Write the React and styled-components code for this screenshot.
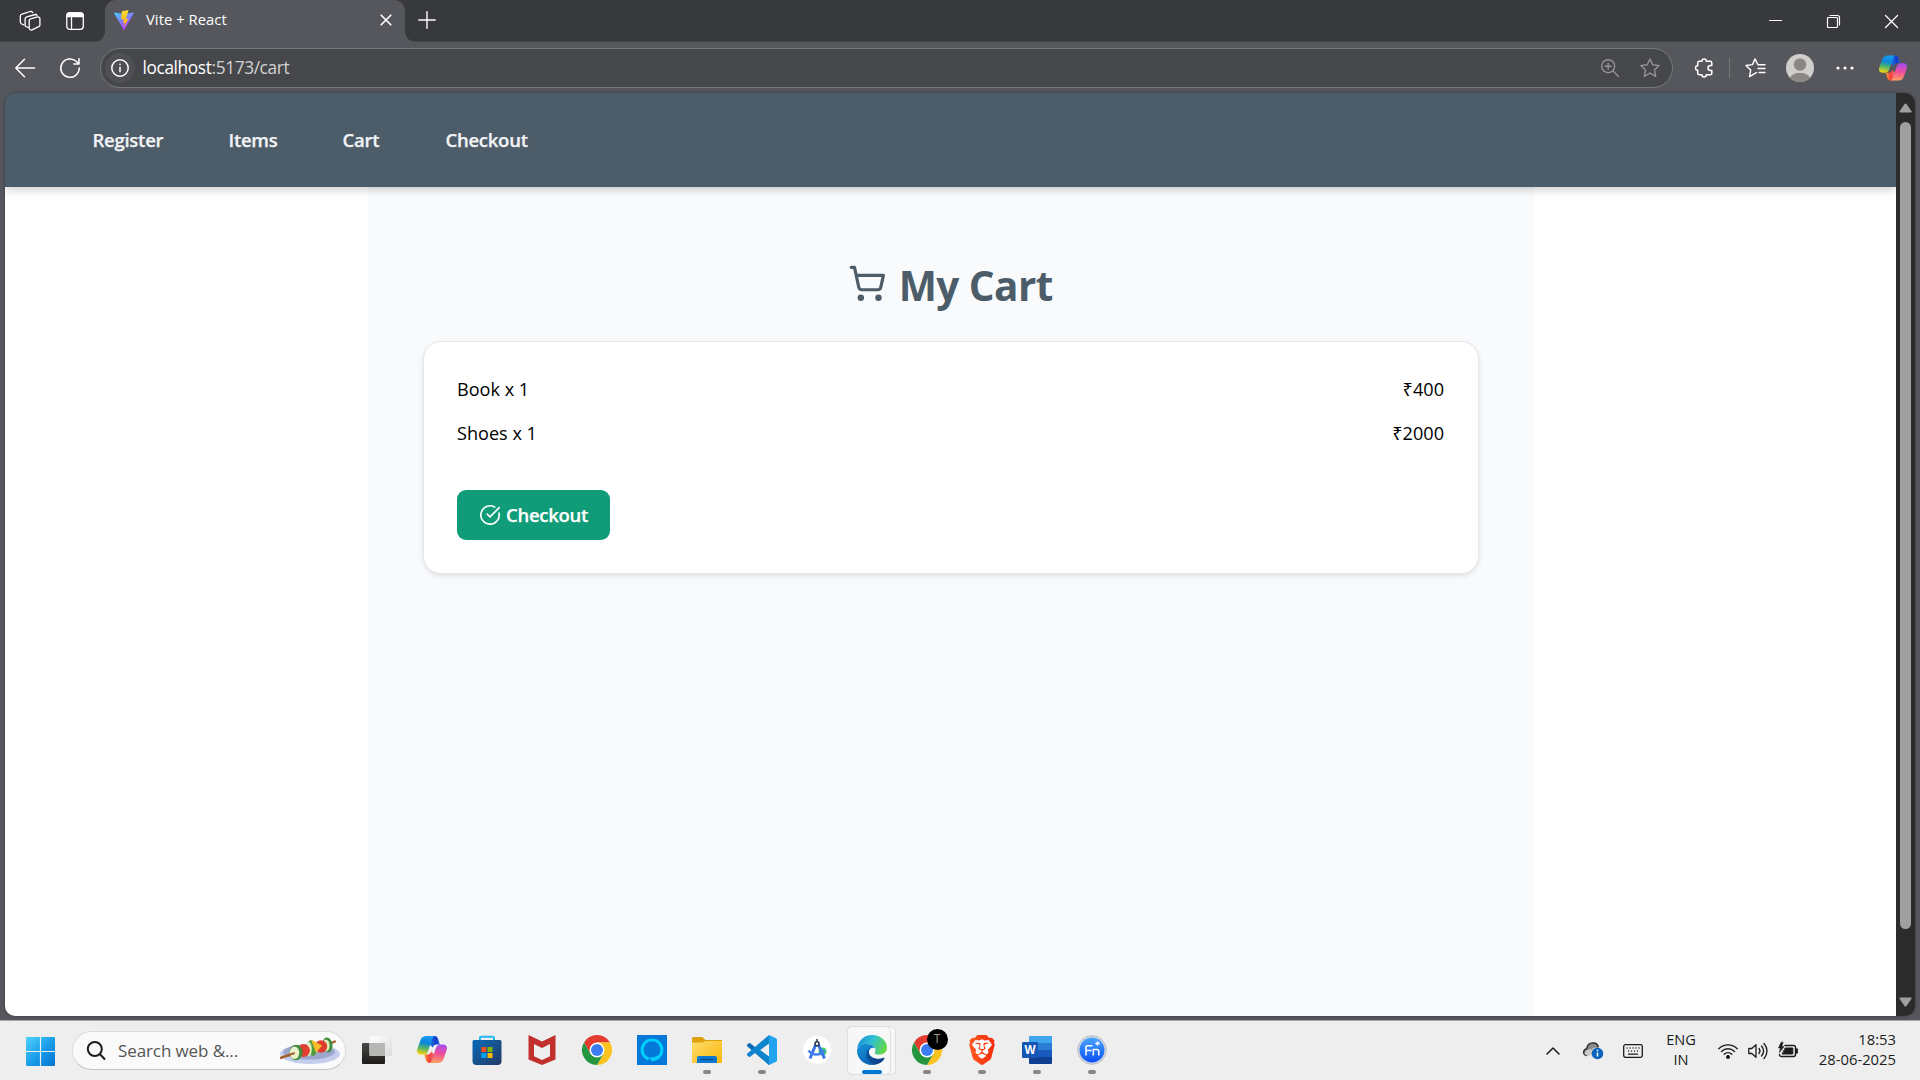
import React from "react";
import styled, { createGlobalStyle } from "styled-components";
import { ShoppingCart, CircleCheckBig } from "lucide-react";
import { SiBrave } from "react-icons/si";

const ui = `"Segoe UI", "Open Sans", "Noto Sans", sans-serif`;

const GlobalStyle = createGlobalStyle`
  * { box-sizing: border-box; }
  html, body { margin: 0; padding: 0; overflow: hidden; background: #56575c; }
  body { font-family: ${ui}; }
  svg { display: block; flex: none; overflow: visible; }
`;

const Screen = styled.div`
  width: 1920px;
  height: 1080px;
  display: flex;
  flex-direction: column;
  background: #56575c;
  overflow: hidden;
`;

const Cell = styled.div`
  width: ${(p) => p.$w}px;
  height: 100%;
  flex: none;
  display: flex;
  align-items: center;
  justify-content: center;
`;

/* ---------- tab strip ---------- */
const TabStrip = styled.header`
  height: 42px;
  flex: none;
  display: flex;
  padding-left: 10px;
  background: #38393c;
  box-shadow: inset 0 -1px #45464a;
`;
const StripTools = styled.div`
  display: flex;
  gap: 5px;
  height: 41px;
  margin-right: 10px;
`;
const Tab = styled.div`
  position: relative;
  width: 300px;
  height: 42px;
  display: flex;
  align-items: center;
  padding: 0 11px 2px 9px;
  color: #fff;
  background: #56575c;
  border-radius: 11px 11px 0 0;
  &::before, &::after {
    content: "";
    position: absolute;
    bottom: 0;
    width: 10px;
    height: 10px;
  }
  &::before { left: -10px; background: radial-gradient(circle at 0 0, transparent 9.5px, #56575c 10px); }
  &::after { right: -10px; background: radial-gradient(circle at 100% 0, transparent 9.5px, #56575c 10px); }
`;
const TabTitle = styled.span`
  flex: 1;
  margin-left: 12px;
  padding-bottom: 2px;
  font-size: 14.8px;
  line-height: 20px;
  letter-spacing: 0.04px;
`;
const NewTab = styled.div`
  display: flex;
  height: 39px;
  margin-left: 2px;
`;
const WindowControls = styled.div`
  display: flex;
  height: 42px;
  margin-left: auto;
`;

/* ---------- toolbar ---------- */
const Toolbar = styled.div`
  height: 51px;
  flex: none;
  display: flex;
  align-items: center;
  padding: 1px 0 0 5px;
  color: #fff;
`;
const NavButtons = styled.div`
  display: flex;
  gap: 5px;
  margin-right: 10px;
`;
const AddressBar = styled.div`
  width: 1573px;
  height: 40px;
  display: flex;
  align-items: center;
  padding: 0 2px 0 4px;
  background: #46474a;
  border: 1px solid #77787c;
  border-radius: 20px;
`;
const SiteInfo = styled.div`
  width: 30px;
  height: 30px;
  display: grid;
  place-items: center;
  background: #4f5054;
  border-radius: 50%;
`;
const Url = styled.span`
  flex: 1;
  margin-left: 7.5px;
  padding-bottom: 1px;
  font-size: 17.3px;
  line-height: 24px;
  color: #d2d2d3;
  letter-spacing: -0.38px;
  b { font-weight: 400; color: #fff; }
`;
const ToolbarActions = styled.div`
  display: flex;
  height: 40px;
  margin-left: 12px;
`;
const Divider = styled.i`
  width: 1px;
  height: 20px;
  background: #77787c;
`;

/* ---------- viewport ---------- */
const Viewport = styled.div`
  height: 923px;
  margin: 0 5px;
  flex: none;
  display: flex;
  border-radius: 10px;
  overflow: hidden;
  box-shadow: 0 0 3px rgba(0, 0, 0, 0.35);
`;
const Page = styled.div`
  flex: 1;
  display: flex;
  flex-direction: column;
  background: linear-gradient(#4d5c69 90px, #fff 90px);
  overflow: hidden;
`;
const NavBar = styled.nav`
  position: relative;
  height: 94px;
  flex: none;
  display: flex;
  align-items: center;
  gap: 65.5px;
  padding: 0 0 1px 87.5px;
  background: #4d5c69;
  box-shadow: 0 2px 9px rgba(0, 0, 0, 0.22);
`;
const NavLink = styled.a`
  width: ${(p) => p.$w}px;
  font-size: 18.5px;
  line-height: 26px;
  font-weight: 650;
  letter-spacing: -0.26px;
  -webkit-text-stroke: 0.25px #f3f4f6;
  white-space: nowrap;
  color: #f3f4f6;
`;
const Main = styled.main`
  width: 1166px;
  flex: 1;
  margin-left: 363px;
  padding: 66px 55px 0;
  background: #f9fafc;
`;
const Title = styled.h1`
  height: 64px;
  margin: 0 0 24px;
  display: flex;
  align-items: center;
  justify-content: center;
  gap: 12px;
  padding-right: 1px;
  font-size: 40.5px;
  line-height: 64px;
  font-weight: 700;
  letter-spacing: -0.55px;
  color: #4d5c69;
  svg { margin-bottom: 3px; }
  span { padding-top: 1px; }
`;
const Card = styled.section`
  height: 233px;
  padding: 34px 34px 0 33px;
  display: flex;
  flex-direction: column;
  align-items: stretch;
  background: #fff;
  border: 1px solid #e5e7eb;
  border-radius: 18px;
  box-shadow: 0 2px 5px rgba(0, 0, 0, 0.1);
`;
const CartRow = styled.div`
  height: 26px;
  margin-bottom: 18px;
  display: flex;
  justify-content: space-between;
  font-size: 18.1px;
  line-height: 26px;
  color: #000;
`;
const CheckoutButton = styled.button`
  width: 153px;
  height: 50px;
  margin-top: 26px;
  padding: 0 0 0 22px;
  display: flex;
  align-items: center;
  gap: 5px;
  border: 0;
  border-radius: 9px;
  background: #109c78;
  color: #fff;
  font-family: ${ui};
  font-size: 18.5px;
  font-weight: 650;
  letter-spacing: -0.28px;
  -webkit-text-stroke: 0.25px #fff;
  span { padding-bottom: 2px; }
`;
const ScrollBar = styled.div`
  width: 19px;
  flex: none;
  display: flex;
  flex-direction: column;
  align-items: center;
  justify-content: space-between;
  padding: 10px 0 9px;
  background: #2b2b2b;
`;
const Thumb = styled.div`
  width: 11px;
  height: 807px;
  margin: 9px 0 auto;
  border-radius: 6px;
  background: #9f9f9f;
`;

/* ---------- taskbar ---------- */
const Taskbar = styled.footer`
  height: 60px;
  margin-top: 4px;
  flex: none;
  display: flex;
  align-items: center;
  background: #eeeeee;
  border-top: 1px solid #a5a5a7;
  color: #1c1c1c;
`;
const Start = styled.div`
  margin: 1px 17px 0 26px;
`;
const SearchBox = styled.div`
  width: 274px;
  height: 39px;
  display: flex;
  align-items: center;
  padding: 0 5px 0 14px;
  border: 1px solid #dcdcdc;
  border-bottom-color: #c4c4c4;
  border-radius: 20px;
  background: #fafafa;
  font-size: 17px;
  color: #555;
`;
const SearchText = styled.span`
  flex: 1;
  margin-left: 13px;
  letter-spacing: -0.1px;
`;
const Apps = styled.div`
  display: flex;
  height: 59px;
  margin-left: 3px;
`;
const AppSlot = styled.div`
  width: 55px;
  height: 59px;
  display: flex;
  flex-direction: column;
  align-items: center;
  padding-top: 14px;
  position: relative;
`;
const ActivePlate = styled.span`
  position: absolute;
  z-index: 0;
  top: 5px;
  left: 3px;
  width: ${(p) => p.$w}px;
  height: 49px;
  border: 1px solid #dedede;
  border-radius: 5px;
  background: #f7f7f7;
`;
const Glyph = styled.div`
  position: relative;
  width: 30px;
  height: 30px;
  padding-top: ${(p) => p.$drop || 0}px;
`;
const Indicator = styled.span`
  position: relative;
  width: ${(p) => (p.$active ? 20 : 8)}px;
  height: 4px;
  margin-top: 5px;
  border-radius: 2px;
  background: ${(p) => (p.$active ? "#0078d4" : "#868686")};
`;
const Tray = styled.div`
  display: flex;
  height: 59px;
  margin-left: auto;
`;
const TrayGroup = styled.div`
  display: flex;
  align-items: center;
  gap: 10px;
  width: 100px;
  padding-left: 10px;
`;
const Lang = styled.div`
  width: 54px;
  padding-top: 8px;
  text-align: center;
  font-size: 14.6px;
  line-height: 20px;
`;
const Clock = styled.div`
  width: 112px;
  padding: 8px 24px 0 0;
  display: flex;
  flex-direction: column;
  align-items: flex-end;
  white-space: nowrap;
  font-size: 14.8px;
  line-height: 20px;
`;

const Line = ({ w = 20, h = 20, color = "#fff", sw = 1.3, children }) => (
  <svg width={w} height={h} viewBox={`0 0 ${w} ${h}`} fill="none" stroke={color} strokeWidth={sw} strokeLinecap="round" strokeLinejoin="round">
    {children}
  </svg>
);

const Workspaces = () => (
  <Line>
    <path d="M9.2 9.3c.2-.8.7-1.300 1.500-1.500l6.800-1.900c1.200-.3 2.400.5 2.400 1.800v6.200c0 .8-.5 1.500-1.300 1.800l-6.500 3.100c-1.400.7-2.900-.2-2.900-1.800z" />
    <path d="M8.200 16.500 6.800 16c-1-.3-1.700-1-1.700-2V8c0-1.100.7-1.900 1.700-2.200L15.500 3.500" />
    <path d="M4 14 1.500 12.800C.8 12.400.3 11.900.3 11V5.200c0-1 .7-1.800 1.600-2L10.200.5c1.200-.3 2.200.3 2.500 1.200" />
    <path d="M16 3.300c.4.200.8.700 1 1.200" />
  </Line>
);
const TabActions = () => (
  <Line w={18} h={18} sw={1.3}>
    <rect x=".8" y=".8" width="16.500" height="16.500" rx="3" />
    <path d="M1 3a2 2 0 0 1 2-2h12a2 2 0 0 1 2 2v1.500H1z" fill="#fff" />
    <path d="M5.500 5v12" />
  </Line>
);
const ViteLogo = () => (
  <svg width="20" height="20" viewBox="0 0 20 20">
    <defs>
      <linearGradient id="viteA" x1="0" y1="0" x2=".6" y2="1"><stop stopColor="#41d1ff" /><stop offset="1" stopColor="#bd34fe" /></linearGradient>
      <linearGradient id="viteB" x1="0" y1="0" x2="0" y2="1"><stop stopColor="#ffdd35" /><stop offset="1" stopColor="#ffa800" /></linearGradient>
    </defs>
    <path d="M.4 2.500 9.500 4l10-1.600c.4 0 .6.300.4.600l-9.500 16.700a.4.4 0 0 1-.8 0L0 3c-.2-.300.1-.500.4-.500z" fill="url(#viteA)" />
    <path d="m14.500 0-6.700 1.300-.7 8.200 2.700-.5-.7 4 1.900-.6-1.200 5.100 4.700-9-2.600.5z" fill="url(#viteB)" />
  </svg>
);
const Copilot = ({ id, w = 30, h = 27 }) => (
  <svg width={w} height={h} viewBox="0 0 30 27">
    <defs>
      <linearGradient id={`${id}a`} x1=".5" y1="0" x2=".3" y2="1"><stop stopColor="#1a9cf0" /><stop offset=".35" stopColor="#0b86dc" /><stop offset=".65" stopColor="#4fb56b" /><stop offset="1" stopColor="#ffd60a" /></linearGradient>
      <linearGradient id={`${id}b`} x1=".5" y1="0" x2=".4" y2="1"><stop stopColor="#a64bf0" /><stop offset=".5" stopColor="#ee4f98" /><stop offset="1" stopColor="#ffa25c" /></linearGradient>
      <linearGradient id={`${id}c`}><stop stopColor="#1b8bf0" /><stop offset=".6" stopColor="#1738c9" /><stop offset="1" stopColor="#2b6be0" /></linearGradient>
      <linearGradient id={`${id}d`}><stop stopColor="#ffb02e" /><stop offset=".5" stopColor="#f4433f" /><stop offset="1" stopColor="#f26a73" /></linearGradient>
    </defs>
    <path d="M14 0h3.500c2 0 3 1 3.600 3L22.500 7.500c.2.500.5.800 1 .9h-4c-2 0-3 1-3.600 3L12 8z" fill={`url(#${id}c)`} />
    <path d="M16 27h-3.500c-2 0-3-1-3.600-3L7.500 19.500c-.2-.500-.5-.800-1-.900h4c2 0 3-1 3.600-3L18 19z" fill={`url(#${id}d)`} />
    <path d="M9.500 0H18c-1.600 0-2.500 1.400-3.100 3.200l-3.700 11.500C10.400 17.300 9 18.600 6.500 18.600H4C.5 18.600-.6 16 .3 13L3.600 3.700C4.500 1.300 6.600 0 9.500 0z" fill={`url(#${id}a)`} />
    <path d="M20.500 27H12c1.600 0 2.500-1.400 3.100-3.200l3.700-11.500c.8-2.600 2.200-3.900 4.700-3.900H26c3.500 0 4.600 2.600 3.700 5.600l-3.300 9.300c-.9 2.400-3 3.700-5.900 3.700z" fill={`url(#${id}b)`} />
  </svg>
);
const Puzzle = () => (
  <Line w={21} h={20} sw={1.5}>
    <path d="M5.300 3.300h2.600a2.200 2.200 0 0 1 4.400 0h3.900a1.600 1.600 0 0 1 1.600 1.600v2.600h-1.300a2.500 2.500 0 0 0 0 5h1.300v2.700a1.600 1.600 0 0 1-1.600 1.600h-3.900a2.200 2.200 0 0 1-4.400 0H5.300a1.600 1.600 0 0 1-1.600-1.600v-3a2.200 2.200 0 0 1 0-4.400V4.900a1.600 1.600 0 0 1 1.600-1.600z" />
  </Line>
);
const StarOutline = () => (
  <Line color="#939395" sw={1.4}>
    <path d="m10 1 2.700 5.800 6.500.8-4.800 4.300 1.300 6.500L10 15.200l-5.700 3.200 1.300-6.500L.8 7.600l6.500-.8z" />
  </Line>
);
const Favorites = () => (
  <Line w={21} h={20} sw={1.4}>
    <path d="M11.300 14.600 10 15.300l-5.500 3.300 1.200-6.500L1 7.500l6.500-.9L10 .9l2.700 5.400M13 10.500h7M14 14.500h6M13 6.800h7" />
  </Line>
);

const WindowsLogo = () => (
  <svg width="29" height="29" viewBox="0 0 29 29">
    <defs><linearGradient id="win" gradientUnits="userSpaceOnUse" x1="0" y1="0" x2="29" y2="29"><stop stopColor="#4fd3fb" /><stop offset=".5" stopColor="#1aa0ea" /><stop offset="1" stopColor="#0672cf" /></linearGradient></defs>
    <path d="M1 0h12.900v13.900H0V1a1 1 0 0 1 1-1zm14.100 0H28a1 1 0 0 1 1 1v12.900H15.100zM0 15.100h13.900V29H1a1 1 0 0 1-1-1zm15.100 0H29V28a1 1 0 0 1-1 1H15.100z" fill="url(#win)" />
  </svg>
);
const Kebab = () => (
  <svg width="60" height="28" viewBox="0 0 60 28">
    <ellipse cx="30" cy="17" rx="30" ry="10" fill="#c4cdec" />
    <ellipse cx="29" cy="15" rx="26" ry="7.500" fill="#9da6cc" />
    <path d="m1 21 12-4M50 6.500l5-2" stroke="#a2602e" strokeWidth="2.200" strokeLinecap="round" />
    <ellipse cx="47.500" cy="8" rx="5" ry="7.500" fill="#3f8c3c" transform="rotate(-8 47.500 8)" />
    <ellipse cx="46" cy="8.500" rx="3.600" ry="6" fill="#dfeebc" />
    <circle cx="41" cy="9.500" r="6.200" fill="#df3d2f" />
    <ellipse cx="32" cy="11" rx="4.500" ry="8" fill="#4b9a3f" transform="rotate(-12 32 11)" />
    <path d="m31 2.500 11 6-6 7.500z" fill="#f8bb2a" />
    <ellipse cx="29" cy="12" rx="2.800" ry="7" fill="#dfeebc" />
    <circle cx="23.500" cy="13.500" r="6.400" fill="#e23f31" />
    <ellipse cx="16" cy="15.500" rx="6.500" ry="7.800" fill="#3f8c3c" />
    <ellipse cx="14.500" cy="15.800" rx="4.800" ry="6.200" fill="#e9f2cb" />
    <path d="m1 20.500 13-4.300" stroke="#a2602e" strokeWidth="2" strokeLinecap="round" />
  </svg>
);
const Desktops = () => (
  <svg width="30" height="30" viewBox="0 0 30 30">
    <defs><linearGradient id="tvA" x1="0" y1="0" x2="0" y2="1"><stop stopColor="#4a4945" /><stop offset="1" stopColor="#1c1b1a" /></linearGradient>
      <linearGradient id="tvB" x1="0" y1="0" x2="1" y2="1"><stop stopColor="#fff" /><stop offset="1" stopColor="#dcdcdc" /></linearGradient></defs>
    <rect x="0" y="8" width="23" height="21" rx="1" fill="url(#tvA)" />
    <rect x="7.500" y="1" width="22.500" height="20" rx="1" fill="url(#tvB)" />
    <path d="M7.500 8H22a1 1 0 0 1 1 1v12H8.500a1 1 0 0 1-1-1z" fill="#b6b6b5" />
  </svg>
);
const Store = () => (
  <svg width="30" height="30" viewBox="0 0 30 30">
    <defs><linearGradient id="store" x1="0" y1="0" x2="1" y2="1"><stop stopColor="#0a6ab8" /><stop offset="1" stopColor="#243a66" /></linearGradient></defs>
    <path d="M8 6V3a1.300 1.300 0 0 1 1.300-1.300h11.400A1.300 1.300 0 0 1 22 3v3" fill="none" stroke="#21b9f2" strokeWidth="2" />
    <path d="M.5 6.500A1.500 1.500 0 0 1 2 5h26a1.500 1.500 0 0 1 1.500 1.500V26a4 4 0 0 1-4 4h-21a4 4 0 0 1-4-4z" fill="url(#store)" />
    <path d="M9.300 12h5v5h-5z" fill="#f25022" /><path d="M15.500 12h5v5h-5z" fill="#7fba00" />
    <path d="M9.300 18h5v5h-5z" fill="#00a4ef" /><path d="M15.500 18h5v5h-5z" fill="#ffb900" />
  </svg>
);
const McAfee = () => (
  <svg width="30" height="30" viewBox="0 0 30 30">
    <path d="M1.500 0 15 6.500 28.500 0v24.500L15 30 1.500 24.500zM7 9v12.300l8 3.600 8-3.600V9l-8 4z" fill="#c1302d" fillRule="evenodd" />
  </svg>
);
const Chrome = () => (
  <svg width="30" height="30" viewBox="0 0 30 30">
    <path d="M15 7.500h13A15 15 0 0 0 2 7.500L8.500 18.700z" fill="#e33b2e" />
    <path d="M21.500 18.700 15 30A15 15 0 0 0 28 7.500H15z" fill="#fcc31e" />
    <path d="M8.500 18.700 2 7.500A15 15 0 0 0 15 30l6.500-11.300z" fill="#24963f" />
    <circle cx="15" cy="15" r="7.500" fill="#fff" /><circle cx="15" cy="15" r="6" fill="#3b7cf0" />
  </svg>
);
const Alexa = () => (
  <svg width="30" height="30" viewBox="0 0 30 30">
    <path d="M0 0h30v30H0z" fill="#0578da" />
    <circle cx="15" cy="14.800" r="9.900" fill="none" stroke="#00cfff" strokeWidth="2.900" />
    <path d="M11.500 27v-3.600c.8.400 1.700.600 2.600.600V27z" fill="#0578da" />
    <path d="M14 26.200v-3.700c2.500 0 5-.6 7-2.200l1.500 1.600c-2 2.400-5 4-8.500 4.300z" fill="#00cfff" />
  </svg>
);
const Explorer = () => (
  <svg width="30" height="30" viewBox="0 0 30 30">
    <defs><linearGradient id="exp" x1="0" y1="0" x2="1" y2="1"><stop stopColor="#ffdb6e" /><stop offset="1" stopColor="#f8b808" /></linearGradient></defs>
    <path d="M0 3.500A1.500 1.500 0 0 1 1.500 2h8c.6 0 1 .2 1.400.6L13.500 5H30v3H0z" fill="#dfa00d" />
    <path d="M0 7.500h10.500L13.500 6H30v20.500a1.500 1.500 0 0 1-1.500 1.500h-27A1.500 1.500 0 0 1 0 26.500z" fill="url(#exp)" />
    <path d="M5 28v-5a2 2 0 0 1 2-2h16a2 2 0 0 1 2 2v5z" fill="#0c78cf" />
    <path d="M8.500 24.500h13" stroke="#064c8b" strokeWidth="1.200" />
  </svg>
);
const VsCode = () => (
  <svg width="30" height="30" viewBox="0 0 30 30">
    <path d="M22 0 8.500 12.500 3.200 8.300a1.500 1.500 0 0 0-1.700.1L.4 9.500a1.300 1.300 0 0 0 0 1.900L22 30l1-8.500L9.500 12z" fill="#0a6bb3" />
    <path d="M22 30 8.500 17.500l-5.300 4.200a1.500 1.500 0 0 1-1.700-.1L.4 20.500a1.300 1.300 0 0 1 0-1.900L22 0l1 8.500z" fill="#0d85ce" />
    <path d="M22 0 29 3.200c.6.300 1 .9 1 1.600v20.400c0 .7-.4 1.300-1 1.600L22 30z" fill="#22a3ee" />
    <path d="m22 8.500-8.800 6.500L22 21.500z" fill="#eee" />
  </svg>
);
const AndroidStudio = () => (
  <svg width="30" height="30" viewBox="0 0 30 30">
    <circle cx="15" cy="15" r="13.700" fill="#fff" stroke="#fff" strokeWidth="1.500" strokeDasharray="2 2" />
    <circle cx="20.500" cy="16.500" r="4" fill="#40c978" />
    <path d="m14 9-6 14.500M16 9l6.500 14.500" stroke="#3c72e8" strokeWidth="3" />
    <path d="M6.500 15.500c4 5.300 12 5.300 16 0" fill="none" stroke="#4580ef" strokeWidth="2.400" />
    <circle cx="15" cy="8.700" r="2" fill="#fff" stroke="#1f3442" strokeWidth="1.400" />
    <path d="M15 4v2.500" stroke="#1f3442" strokeWidth="1.500" />
  </svg>
);
const Edge = () => (
  <svg width="30" height="30" viewBox="0 0 30 30">
    <defs>
      <linearGradient id="edA" x1="0" y1=".3" x2="1" y2=".6"><stop stopColor="#1a8fd8" /><stop offset=".45" stopColor="#2fc0d4" /><stop offset="1" stopColor="#64d83c" /></linearGradient>
      <linearGradient id="edB" x1="0" y1="0" x2=".6" y2="1"><stop stopColor="#1596d8" /><stop offset="1" stopColor="#0b62b4" /></linearGradient>
      <linearGradient id="edC" x1="0" y1="0" x2="1" y2="1"><stop stopColor="#0d5bab" /><stop offset="1" stopColor="#0c3f80" /></linearGradient>
    </defs>
    <path d="M.2 13.500C1 6 7 0 15 0c8.500 0 15 6 15 12.500 0 4.300-3.200 7.300-7.500 7.300-3 0-5-1-5-1.900 0-.6 1-1.200 1-3.200C18.500 12 15 9 10 9 6 9 2 11 .2 13.500z" fill="url(#edA)" />
    <path d="M0 15.500C.3 11.500 4.500 9 9.500 9c5.500 0 9 3 9 5.800 0 .3 0 .7-.1 1-.9-3-6.200-3-6.900 2-.8 6.500 6 11 9.500 11C19 29.600 17 30 15 30 6.500 30 0 23.500 0 15.500z" fill="url(#edB)" />
    <path d="M14 12.600C10.500 14 9 17 9.200 20c.3 5 5 9.700 10.300 9.200 3.500-.6 6.500-3 8-5.800.4-.8-.2-1.200-.8-.9C21 25 12.500 22.800 12 17.500c-.2-2 .7-3.700 2-4.900z" fill="url(#edC)" />
    <path d="M12.200 16c-.4 3.600 2.300 6.500 6.300 7.300 3 .6 6 .2 8.200-.8.600-.3 1.300.1.900.9l2.900-4.400-3.700-.5c-1.400.9-3 1.300-4.700 1.300-3 0-4.800-1-4.700-1.900.1-.7 1-1.300 1-3.100l-.1-.8c-.9-1.900-5.400-1.500-6.100 2z" fill="#f7f7f7" />
  </svg>
);
const BadgeDot = styled.span`
  position: absolute;
  top: -6px;
  left: 15px;
  width: 21px;
  height: 21px;
  border-radius: 50%;
  background: #000;
  color: #a8957f;
  font-size: 12px;
  line-height: 20px;
  text-align: center;
`;
const BraveWrap = styled.div`
  width: 30px;
  height: 30px;
  display: flex;
  justify-content: center;
  background: radial-gradient(circle, #fff 9.500px, transparent 10px);
`;
const Brave = () => (
  <BraveWrap>
    <svg width="0" height="0"><defs><linearGradient id="brv" x1="0" y1="0" x2="1" y2="0"><stop stopColor="#ff5a22" /><stop offset="1" stopColor="#f42a08" /></linearGradient></defs></svg>
    <SiBrave size={30} fill="url(#brv)" />
  </BraveWrap>
);
const Word = () => (
  <svg width="30" height="30" viewBox="0 0 30 30">
    <path d="M8 1h22v7H7V2a1 1 0 0 1 1-1z" fill="#41a5ee" /><path d="M7 8h23v7H7z" fill="#2b7cd3" />
    <path d="M7 15h23v7H7z" fill="#185abd" /><path d="M7 22h23v6a1 1 0 0 1-1 1H8a1 1 0 0 1-1-1z" fill="#103f91" />
    <rect x="0" y="7" width="16" height="16" rx="1.300" fill="#1555b5" />
    <text x="8" y="19" textAnchor="middle" fontFamily="Open Sans" fontWeight="700" fontSize="11.500" fill="#fff">W</text>
  </svg>
);
const Fn = () => (
  <svg width="30" height="30" viewBox="0 0 30 30">
    <defs><linearGradient id="fn" x1="0" y1="0" x2="0" y2="1"><stop stopColor="#4aa5ff" /><stop offset="1" stopColor="#0a50f5" /></linearGradient></defs>
    <circle cx="15" cy="15" r="14.300" fill="#d5dbe6" stroke="#b9bcc2" /><circle cx="15" cy="15" r="12.500" fill="url(#fn)" />
    <path d="M9 20.500V11.700a1 1 0 0 1 1-1h5.500M9 15.500h5.500M16.300 20.500v-6h3.500a2 2 0 0 1 2 2v4M20.500 6.200v4.400M18.300 8.400h4.400" fill="none" stroke="#fff" strokeWidth="1.500" />
  </svg>
);

const apps = [
  { icon: <Desktops /> },
  { icon: <Copilot id="tb" />, drop: 1 },
  { icon: <Store /> },
  { icon: <McAfee /> },
  { icon: <Chrome /> },
  { icon: <Alexa /> },
  { icon: <Explorer />, open: true },
  { icon: <VsCode />, open: true },
  { icon: <AndroidStudio /> },
  { icon: <Edge />, open: true, active: true },
  { icon: <><Chrome /><BadgeDot>T</BadgeDot></>, open: true },
  { icon: <Brave />, open: true },
  { icon: <Word />, open: true },
  { icon: <Fn />, open: true },
];
const links = [["Register", 70.5], ["Items", 48.5], ["Cart", 37.5], ["Checkout", 82]];
const cart = [
  { name: "Book", qty: 1, price: 400 },
  { name: "Shoes", qty: 1, price: 2000 },
];

const Chevron = () => <Line w={14} h={8} color="#1b1b1b" sw={1.500}><path d="m1 7 6-6 6 6" /></Line>;
const Cloud = () => (
  <svg width="20" height="18" viewBox="0 0 20 18">
    <path d="M3.500 13.500C1.500 13 .5 11.500.7 9.800.9 8.200 2 7 3.800 6.700 4.300 3 7 .8 10 .8c2.700 0 4.700 1.500 5.300 4l-7 4z" fill="#8a8a8a" stroke="#222" strokeWidth="1.300" />
    <path d="M4 13.500h6L16 6c-3-2-6.500 0-7.500 1.500C6 6.500 2.500 8 1.500 11c.3 1.700 1.300 2.400 2.500 2.500z" fill="#c9c9c9" />
    <circle cx="14.500" cy="11.500" r="5.800" fill="#0a64bd" />
    <path d="M14.500 10.500v4M14.500 7.800v1.500" stroke="#fff" strokeWidth="1.500" />
  </svg>
);
const Keyboard = () => (
  <Line w={20} h={14} color="#1b1b1b" sw={1.300}>
    <rect x=".7" y=".7" width="18.600" height="12.600" rx="1.800" />
    <path d="M4 4h.1M7 4h.1M10 4h.1M13 4h.1M16 4h.1M5.500 7h.1M8.500 7h.1M11.500 7h.1M14.500 7h.1M5.500 10.200h9" />
  </Line>
);
const Wifi = () => (
  <Line w={20} h={16} color="#1b1b1b" sw={1.400}>
    <path d="M.8 5.700a13 13 0 0 1 18.400 0M3.500 8.500a9.200 9.200 0 0 1 13 0M6.200 11.200a5.400 5.400 0 0 1 7.600 0" />
    <circle cx="10" cy="14" r="1.300" fill="#1b1b1b" />
  </Line>
);
const Volume = () => (
  <Line w={20} h={18} color="#1b1b1b" sw={1.300}>
    <path d="M.8 6.500v5h3L8 15.300V2.700L3.800 6.500zM11 6.500c1.200 1.500 1.200 3.500 0 5M13.500 4c2.500 3 2.500 7 0 10M16 1.500c4 4.500 4 10.500 0 15" />
  </Line>
);
const Battery = () => (
  <Line w={21} h={17} color="#1b1b1b" sw={1.400}>
    <path d="M7 3.500h8.500a2 2 0 0 1 2 2v7a2 2 0 0 1-2 2h-12a2 2 0 0 1-2-2" />
    <path d="M18.700 7.500v3" strokeWidth="2.400" />
    <path d="M7.500 6h7.300v6H4.500z" fill="#1b1b1b" strokeWidth="1" />
    <path d="M3 .5.500 6h2L1.500 10.500 6 4.500H3.800L5 .5z" fill="#1b1b1b" strokeWidth=".6" />
  </Line>
);

export default function App() {
  return (
    <Screen>
      <GlobalStyle />
      <TabStrip>
        <StripTools>
          <Cell $w={40}><Workspaces /></Cell>
          <Cell $w={40}><TabActions /></Cell>
        </StripTools>
        <Tab>
          <ViteLogo />
          <TabTitle>Vite + React</TabTitle>
          <Line w={16} h={16} sw={1.600}><path d="m3.200 3.200 9.600 9.600m0-9.600-9.600 9.600" /></Line>
        </Tab>
        <NewTab><Cell $w={40}><Line w={18} h={18} sw={1.400}><path d="M9 .8v16.400M.8 9h16.400" /></Line></Cell></NewTab>
        <WindowControls>
          <Cell $w={58}><Line w={13} h={3} sw={1.200}><path d="M.5 .5h12" /></Line></Cell>
          <Cell $w={58}><Line w={13} h={13} sw={1.200}><rect x=".5" y="2.500" width="10" height="10" rx="1" /><path d="M3 .5h7.500a2 2 0 0 1 2 2V10" /></Line></Cell>
          <Cell $w={58}><Line w={13} h={13} sw={1.300}><path d="m.5 .5 12 12m0-12-12 12" /></Line></Cell>
        </WindowControls>
      </TabStrip>

      <Toolbar>
        <NavButtons>
          <Cell $w={40}><Line sw={1.500}><path d="M19.500 10H.8M9.500 1.300.8 10l8.700 8.700" /></Line></Cell>
          <Cell $w={40}><Line sw={1.500}><path d="M19.200 10a9.200 9.200 0 1 1-3-6.700L19 6M19 .8V6h-5.200" /></Line></Cell>
        </NavButtons>
        <AddressBar>
          <SiteInfo>
            <Line w={18} h={18} sw={1.500}><circle cx="9" cy="9" r="8.200" /><path d="M9 8.300v4.500M9 5.300v.1" /></Line>
          </SiteInfo>
          <Url><b>localhost</b>:5173/cart</Url>
          <Cell $w={40}>
            <Line w={18} h={18} color="#939395" sw={1.400}><circle cx="7.200" cy="7.200" r="6.500" /><path d="m12 12 5.500 5.500M7.200 4.200v6M4.200 7.200h6" /></Line>
          </Cell>
          <Cell $w={40}><StarOutline /></Cell>
        </AddressBar>
        <ToolbarActions>
          <Cell $w={39}><Puzzle /></Cell>
          <Cell $w={10}><Divider /></Cell>
          <Cell $w={42}><Favorites /></Cell>
          <Cell $w={48}>
            <svg width="28" height="28" viewBox="0 0 28 28">
              <defs><clipPath id="av"><circle cx="14" cy="14" r="14" /></clipPath></defs>
              <g clipPath="url(#av)"><path d="M0 0h28v28H0z" fill="#d0cecb" /><circle cx="14" cy="10.500" r="6.200" fill="#8a8785" /><ellipse cx="14" cy="26" rx="10.500" ry="7.300" fill="#8a8785" /></g>
            </svg>
          </Cell>
          <Cell $w={42}>
            <svg width="18" height="4" viewBox="0 0 18 4" fill="#fff"><circle cx="2" cy="2" r="1.600" /><circle cx="9" cy="2" r="1.600" /><circle cx="16" cy="2" r="1.600" /></svg>
          </Cell>
          <Cell $w={54}><Copilot id="top" w={28} h={26} /></Cell>
        </ToolbarActions>
      </Toolbar>

      <Viewport>
        <Page>
          <NavBar>
            {links.map(([label, w]) => <NavLink key={label} $w={w}>{label}</NavLink>)}
          </NavBar>
          <Main>
            <Title><ShoppingCart size={38.500} /><span>My Cart</span></Title>
            <Card>
              {cart.map((item) => (
                <CartRow key={item.name}>
                  <span>{item.name} x {item.qty}</span>
                  <span>₹{item.price}</span>
                </CartRow>
              ))}
              <CheckoutButton><CircleCheckBig size={22} strokeWidth={1.800} /><span>Checkout</span></CheckoutButton>
            </Card>
          </Main>
        </Page>
        <ScrollBar>
          <svg width="13" height="10" viewBox="0 0 13 10"><path d="M5.500 1q1-1.200 2 0l5 7.200q.6 1.300-.8 1.300H1.300Q0 9.500.6 8.200z" fill="#9f9f9f" /></svg>
          <Thumb />
          <svg width="13" height="10" viewBox="0 0 13 10"><path d="M5.500 9q1 1.200 2 0l5-7.200Q13.100.5 11.700.5H1.300Q0 .5.6 1.800z" fill="#9f9f9f" /></svg>
        </ScrollBar>
      </Viewport>

      <Taskbar>
        <Start><WindowsLogo /></Start>
        <SearchBox>
          <Line w={18} h={19} color="#1d1d1d" sw={2}><circle cx="7.800" cy="8" r="7" /><path d="m13 13.300 4.500 4.700" /></Line>
          <SearchText>Search web &amp;...</SearchText>
          <Kebab />
        </SearchBox>
        <Apps>
          {apps.map((app, i) => (
            <AppSlot key={i}>
              {app.active && <><ActivePlate $w={49} /><ActivePlate $w={44} /></>}
              <Glyph $drop={app.drop}>{app.icon}</Glyph>
              {app.open && <Indicator $active={app.active} />}
            </AppSlot>
          ))}
        </Apps>
        <Tray>
          <Cell $w={40}><Chevron /></Cell>
          <Cell $w={39}><Cloud /></Cell>
          <Cell $w={42}><Keyboard /></Cell>
          <Lang>ENG<br />IN</Lang>
          <TrayGroup><Wifi /><Volume /><Battery /></TrayGroup>
          <Clock><span>18:53</span><span>28-06-2025</span></Clock>
        </Tray>
      </Taskbar>
    </Screen>
  );
}
